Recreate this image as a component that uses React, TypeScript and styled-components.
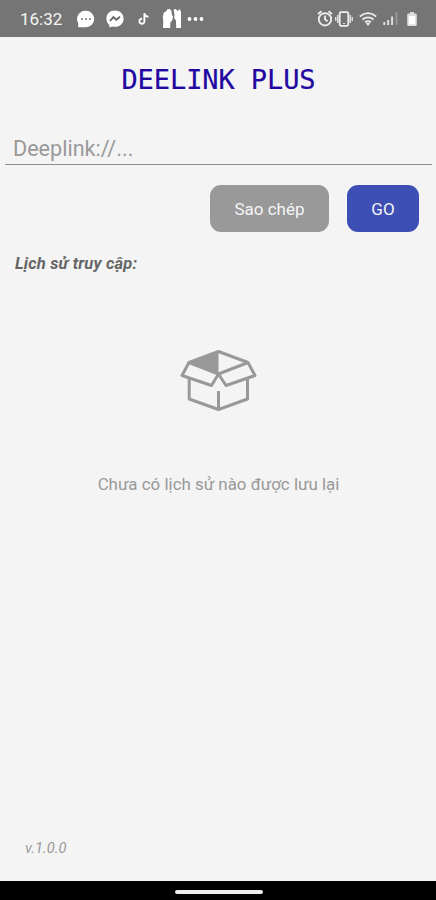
import React from 'react';
import styled, { createGlobalStyle } from 'styled-components';

const GlobalStyle = createGlobalStyle`
  * { box-sizing: border-box; }
  body { margin: 0; background: #f4f4f4; font-family: Roboto, sans-serif; }
`;

const Screen = styled.div`
  width: 436px;
  height: 900px;
  display: flex;
  flex-direction: column;
  background: #f4f4f4;
  overflow: hidden;
`;

const StatusBar = styled.header`
  height: 37px;
  flex: none;
  display: flex;
  justify-content: space-between;
  padding: 0 18px 0 20px;
  background: #757575;
  color: #f5f5f5;
`;

const StatusGroup = styled.div`
  display: flex;
  align-items: center;
  height: 37px;
`;

const Clock = styled.time`
  width: 57px;
  font-size: 17px;
  line-height: 37px;
  padding-top: 1px;
`;

const StatusIcon = styled.svg<{ $gap?: number }>`
  display: block;
  flex: none;
  margin-right: ${({ $gap = 0 }) => $gap}px;
`;

const Content = styled.main`
  flex: 1;
  display: flex;
  flex-direction: column;
`;

const Title = styled.h1`
  margin: 24px 0 0;
  padding-left: 1px;
  height: 38px;
  text-align: center;
  font: 400 27px/38px 'DejaVu Sans Mono', monospace;
  letter-spacing: -0.08px;
  color: #2208a0;
  -webkit-text-stroke: 0.2px #2208a0;
`;

const LinkInput = styled.input`
  margin: 30px 4px 0 5px;
  height: 36px;
  padding: 4px 8px 0;
  border: 0;
  border-bottom: 1.5px solid #8f8f8f;
  border-radius: 0;
  outline: 0;
  background: transparent;
  font: 400 21.6px Roboto, sans-serif;
  color: #444;
  &::placeholder { color: #999; opacity: 1; }
`;

const Actions = styled.div`
  display: flex;
  justify-content: flex-end;
  gap: 18px;
  padding: 20px 17px 0 0;
`;

const Button = styled.button<{ $primary?: boolean }>`
  width: ${({ $primary }) => ($primary ? 72 : 119)}px;
  height: 47px;
  padding: 1px 0 0;
  border: 0;
  border-radius: 11px;
  background: ${({ $primary }) => ($primary ? '#3d4eb5' : '#999')};
  color: #f4f4f8;
  font: 400 17px/20px Roboto, sans-serif;
`;

const HistoryTitle = styled.h2`
  margin: 20px 0 0 15px;
  font: italic 700 16.5px/24px Roboto, sans-serif;
  letter-spacing: 0.18px;
  color: #666;
`;

const EmptyState = styled.section`
  display: flex;
  flex-direction: column;
  align-items: center;
  padding-top: 69px;
`;

const EmptyText = styled.p`
  margin: 59px 0 0;
  padding-left: 1px;
  font-size: 16.9px;
  line-height: 24px;
  color: #999;
  white-space: nowrap;
`;

const Version = styled.footer`
  margin: auto 0 21px 25px;
  font: italic 400 14.7px/24px Roboto, sans-serif;
  color: #999;
`;

const NavigationBar = styled.nav`
  height: 19px;
  flex: none;
  display: flex;
  justify-content: center;
  padding: 9px 0 0 2px;
  background: #000;
`;

const HomeHandle = styled.span`
  width: 88px;
  height: 3.5px;
  border-radius: 2px;
  background: #eee;
`;

const ChatIcon = () => (
  <StatusIcon width="18" height="18" viewBox="0 0 18 18" $gap={11}>
    <path d="M9 .8a8.2 8.2 0 1 1 0 16.4H1.2V13A8.2 8.2 0 0 1 9 .8Z" fill="#fff" />
    <path d="M4 9h2M8 9h2M12 9h2" stroke="#777" strokeWidth="1.7" />
  </StatusIcon>
);

const MessengerIcon = () => (
  <StatusIcon width="18" height="18" viewBox="0 0 18 18" $gap={14}>
    <path d="M9 .6C4 .6.4 4 .4 8.7c0 2.6 1.1 4.8 2.9 6.2v2.7l2.8-1.2c.9.3 1.9.4 2.9.4 5 0 8.6-3.5 8.6-8.1S14 .6 9 .6Z" fill="#fff" />
    <path d="m4 11 3.3-3.8 3 2.6L14 6.7" fill="none" stroke="#666" strokeWidth="1.9" />
  </StatusIcon>
);

const MusicNoteIcon = () => (
  <StatusIcon width="12" height="14" viewBox="0 0 12 14" $gap={12}>
    <path d="M6.4 1v8.5a2.5 2.5 0 1 1-2.2-2.7M6.4 1c.2 2.4 1.8 3.5 4.1 3.7" fill="none" stroke="#fff" strokeWidth="1.9" />
  </StatusIcon>
);

const FiguresIcon = () => (
  <StatusIcon width="20" height="21" viewBox="0 0 20 21" $gap={4}>
    <path d="M1.8 4.5 4 3.5 5.5 1.2 8 1l1.5 2.2.3 3.3 1.2 2.2-.8 3.8-1.8 1.7-.2 5.8H1l.3-7L.8 9Z" fill="#fff" />
    <path d="m11.5 1.5 2.2-.6 2 2.2L17.8 1l1.2 3v16h-4.8l-.2-7.5-1.8-2.3.3-4Z" fill="#fff" />
  </StatusIcon>
);

const MoreIcon = () => (
  <StatusIcon width="18" height="6" viewBox="0 0 18 6">
    <circle cx="3.5" cy="3" r="1.9" fill="#fff" />
    <circle cx="9.5" cy="3" r="1.9" fill="#fff" />
    <circle cx="15.5" cy="3" r="1.9" fill="#fff" />
  </StatusIcon>
);

const AlarmIcon = () => (
  <StatusIcon width="16" height="17" viewBox="0 0 16 17" $gap={2}>
    <g fill="none" stroke="#eee" strokeWidth="1.8">
      <circle cx="8" cy="9.3" r="6.2" />
      <path d="M8 5.4v4l2.6 1.9M1 4l3.5-2.8M11.5 1.2 15 4" />
    </g>
  </StatusIcon>
);

const VibrateIcon = () => (
  <StatusIcon width="18" height="16" viewBox="0 0 18 16" $gap={6}>
    <rect x="4.7" y="1.2" width="8.6" height="13.6" rx="1.2" fill="none" stroke="#eee" strokeWidth="1.8" />
    <path d="M2.8 4v8M.8 6v4M15.2 4v8M17.2 6v4" stroke="#eee" strokeWidth="1.3" />
    <path d="M8 12.5h2" stroke="#ddd" />
  </StatusIcon>
);

const WifiIcon = () => (
  <StatusIcon width="18" height="14" viewBox="0 0 18 14" $gap={6}>
    <g fill="none" stroke="#eee" strokeWidth="1.7">
      <path d="M.8 4.5q8.2-6.6 16.4 0M3.4 7.5q5.6-4.2 11.2 0M6 10.2q3-2 6 0" />
    </g>
    <path d="m7 11.6 2-1 2 1L9 14Z" fill="#eee" />
  </StatusIcon>
);

const SignalIcon = () => (
  <StatusIcon width="16" height="15" viewBox="0 0 16 15" $gap={7}>
    <path d="M1.3 11v3M5.2 9v5M9.1 5.5V14" stroke="#ddd" strokeWidth="2" />
    <path d="M13.5 1v13" stroke="#999" strokeWidth="1.8" />
  </StatusIcon>
);

const BatteryIcon = () => (
  <StatusIcon width="12" height="16" viewBox="0 0 12 16">
    <path d="M4 1h4v1.5h1.6q1.2 0 1.2 1.2v10q0 1.3-1.2 1.3H2.4q-1.2 0-1.2-1.3v-10q0-1.2 1.2-1.2H4Z" fill="#ddd" />
    <path d="M2.8 5h6.4v8.4H2.8Z" fill="#fff" />
  </StatusIcon>
);

const OpenBoxIcon = () => (
  <svg width="78" height="68" viewBox="0 0 78 68">
    <path d="M10 17.5 39.5 6.5V29Z" fill="#999" />
    <g fill="none" stroke="#999" strokeWidth="3" strokeLinejoin="round">
      <path d="m10 17.5 29.5-11 29.5 11L39.5 29ZM10 17.5 3 30.5l29.5 10L39.5 29l7.5 11.5 29-10-7-13" />
      <path d="M10.2 34v20l29.3 10.5 29-10.5V34M39.5 46v18" />
    </g>
  </svg>
);

export default function App() {
  return (
    <>
      <GlobalStyle />
      <Screen>
        <StatusBar>
          <StatusGroup>
            <Clock>16:32</Clock>
            <ChatIcon />
            <MessengerIcon />
            <MusicNoteIcon />
            <FiguresIcon />
            <MoreIcon />
          </StatusGroup>
          <StatusGroup>
            <AlarmIcon />
            <VibrateIcon />
            <WifiIcon />
            <SignalIcon />
            <BatteryIcon />
          </StatusGroup>
        </StatusBar>
        <Content>
          <Title>DEELINK PLUS</Title>
          <LinkInput placeholder="Deeplink://..." aria-label="Deeplink" />
          <Actions>
            <Button>Sao chép</Button>
            <Button $primary>GO</Button>
          </Actions>
          <HistoryTitle>Lịch sử truy cập:</HistoryTitle>
          <EmptyState>
            <OpenBoxIcon />
            <EmptyText>Chưa có lịch sử nào được lưu lại</EmptyText>
          </EmptyState>
          <Version>v.1.0.0</Version>
        </Content>
        <NavigationBar><HomeHandle /></NavigationBar>
      </Screen>
    </>
  );
}
